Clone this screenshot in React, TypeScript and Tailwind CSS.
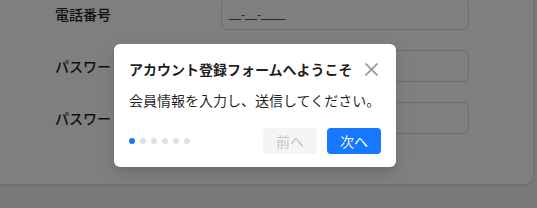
import React from "react";

const jp = { fontFamily: '"Noto Sans CJK JP", "Noto Sans", sans-serif' };

function Row({ label, value }: { label: string; value?: string }) {
  return (
    <div className="flex h-[52px] items-center">
      <div className="w-[176px] pl-[10px] text-[14px] font-medium text-[#1f1f1f]">{label}</div>
      <div className="flex h-[32px] w-[248px] items-center rounded-[6px] border border-[#d9d9d9] bg-white px-[7px]">
        {value && (
          <span className="text-[11px] text-[#1f1f1f]" style={{ fontFamily: '"Liberation Sans", sans-serif' }}>
            {value}
          </span>
        )}
      </div>
    </div>
  );
}

export default function App() {
  return (
    <div className="relative h-[208px] w-[537px] overflow-hidden bg-[#f5f5f5]" style={jp}>
      <div className="-ml-[10px] -mt-[12px] h-[196px] w-[543px] rounded-lg bg-white pl-[55px] shadow-[0_1px_4px_rgba(0,0,0,0.15)]">
        <div className="pt-0">
          <Row label="電話番号" value="__-__-____" />
          <Row label="パスワード" />
          <Row label="パスワード確認" />
        </div>
      </div>

      <div className="absolute inset-0 bg-black/50" />

      <div className="absolute left-[114px] top-[44px] flex h-[123px] w-[282px] flex-col rounded-[6px] bg-white px-[15px] pt-[15px] shadow-[0_6px_16px_rgba(0,0,0,0.12),0_3px_6px_-4px_rgba(0,0,0,0.16)]">
        <div className="flex h-[20px] items-center justify-between">
          <span className="text-[14px] font-bold leading-[20px] text-[#000000e0]">
            アカウント登録フォームへようこそ
          </span>
          <svg width="13" height="13" viewBox="0 0 12 12" className="mr-[3px]">
            <path d="M1 1L11 11M11 1L1 11" stroke="#999" strokeWidth="1.6" strokeLinecap="square" />
          </svg>
        </div>
        <div className="mt-[11px] text-[14px] leading-[20px] text-[#000000e0]">
          会員情報を入力し、送信してください。
        </div>
        <div className="mt-[18px] flex items-center justify-between">
          <div className="flex items-center gap-[5px]">
            <span className="h-[6px] w-[6px] rounded-full bg-[#1677ff]" />
            <span className="h-[6px] w-[6px] rounded-full bg-[#e0e0e0]" />
            <span className="h-[6px] w-[6px] rounded-full bg-[#e0e0e0]" />
            <span className="h-[6px] w-[6px] rounded-full bg-[#e0e0e0]" />
            <span className="h-[6px] w-[6px] rounded-full bg-[#e0e0e0]" />
            <span className="h-[6px] w-[6px] rounded-full bg-[#e0e0e0]" />
          </div>
          <div className="flex items-center gap-[10px]">
            <button className="flex h-[26px] w-[54px] items-center justify-center rounded-[4px] bg-[#f5f5f5] text-[14px] text-[#c4c4c4]">
              前へ
            </button>
            <button className="flex h-[26px] w-[54px] items-center justify-center rounded-[4px] bg-[#1677ff] text-[14px] text-white">
              次へ
            </button>
          </div>
        </div>
      </div>
    </div>
  );
}
